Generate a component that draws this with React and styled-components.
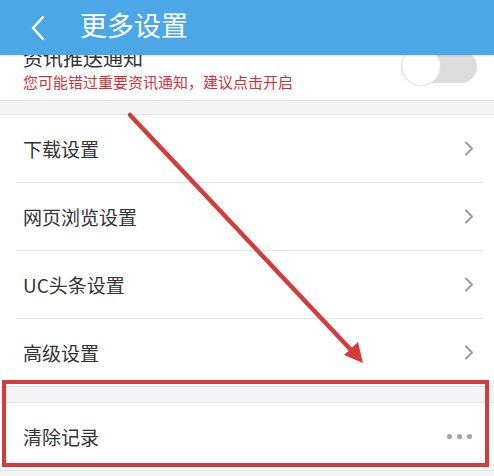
import React from 'react'
import styled, { createGlobalStyle } from 'styled-components'

const GlobalStyle = createGlobalStyle`
    html, body {
        margin: 0;
        padding: 0;
        background: #f4f4f6;
    }
    body {
        font-family: "Noto Sans CJK SC", "Noto Sans", sans-serif;
        color: #333;
    }
`

const Page = styled.div`
    position: relative;
    width: 494px;
    height: 476px;
    overflow: hidden;
    display: flex;
    flex-direction: column;
    background: #f4f4f6;
`

const Header = styled.header`
    position: relative;
    z-index: 2;
    flex: none;
    height: 55px;
    background: #4ba7e5;
    display: flex;
    align-items: center;
    gap: 33px;
    padding-left: 29px;
    box-shadow: 0 1px 2px rgba(0, 0, 0, 0.12);
`

const Title = styled.h1`
    margin: 0;
    font-size: 27px;
    font-weight: 400;
    color: #fff;
    line-height: 1;
    padding-bottom: 6px;
`

const Scroller = styled.div`
    flex: 1;
    overflow: hidden;
`

const Scrolled = styled.div`
    margin-top: -25px;
`

const Section = styled.section`
    background: #fff;
    border-top: ${({ $top }) => ($top ? '1px solid #e3e3e3' : 'none')};
    border-bottom: 1px solid #e3e3e3;
    padding: ${({ $inset }) => ($inset ? '0 11px 0 16px' : '0')};
`

const Gap = styled.div`
    height: ${({ $h }) => $h}px;
`

const PushRow = styled.div`
    height: 70px;
    display: flex;
    align-items: center;
    justify-content: space-between;
    padding: 0 17px 0 23px;
`

const PushText = styled.div`
    display: flex;
    flex-direction: column;
    padding-top: 8px;
`

const PushTitle = styled.span`
    font-size: 20px;
    line-height: 26px;
    color: #333;
`

const PushHint = styled.span`
    font-size: 15px;
    line-height: 22px;
    color: #cf3338;
`

const Toggle = styled.div`
    position: relative;
    width: 76px;
    height: 32px;
    border-radius: 16px;
    background: #dcdcdc;
    margin-top: 4px;
`

const Knob = styled.div`
    position: absolute;
    left: 0;
    top: -5px;
    width: 40px;
    height: 40px;
    border-radius: 50%;
    background: #fff;
    border: 1px solid #dedede;
    box-sizing: border-box;
`

const Row = styled.div`
    height: ${({ $h }) => $h || 67}px;
    display: flex;
    align-items: center;
    justify-content: space-between;
    padding: 0 9px 0 7px;
    border-bottom: 1px solid #e6e6e6;
    font-size: 19px;
    color: #333;

    &:last-child {
        border-bottom: none;
    }
`

const PlainRow = styled(Row)`
    padding: 0 22px 0 23px;
`

const Dots = styled.div`
    display: flex;
    gap: 5px;

    span {
        width: 5px;
        height: 5px;
        border-radius: 50%;
        background: #a3a3a3;
    }
`

const Marker = styled.div`
    position: absolute;
    z-index: 3;
    left: 2px;
    top: 380px;
    width: 487px;
    height: 87px;
    box-sizing: border-box;
    border: 4px solid #d43b3b;
    pointer-events: none;
`

const ArrowLayer = styled.svg`
    position: absolute;
    z-index: 3;
    left: 0;
    top: 0;
    pointer-events: none;
`

const BackIcon = () => (
    <svg width="18" height="26" viewBox="0 0 18 26">
        <path d="M14 2 L4 13 L14 24" fill="none" stroke="#fff" strokeWidth="2.4" strokeLinecap="round" strokeLinejoin="round" />
    </svg>
)

const Chevron = () => (
    <svg width="10" height="15" viewBox="0 0 10 15">
        <path d="M2 1.5 L8 7.5 L2 13.5" fill="none" stroke="#999" strokeWidth="2" strokeLinecap="round" strokeLinejoin="round" />
    </svg>
)

const settings = ['下载设置', '网页浏览设置', 'UC头条设置', '高级设置']

const App = () => (
    <Page>
        <GlobalStyle />
        <Header>
            <BackIcon />
            <Title>更多设置</Title>
        </Header>
        <Scroller>
            <Scrolled>
                <Section>
                    <PushRow>
                        <PushText>
                            <PushTitle>资讯推送通知</PushTitle>
                            <PushHint>您可能错过重要资讯通知，建议点击开启</PushHint>
                        </PushText>
                        <Toggle>
                            <Knob />
                        </Toggle>
                    </PushRow>
                </Section>
                <Gap $h={13} />
                <Section $top $inset>
                    {settings.map(label => (
                        <Row key={label}>
                            {label}
                            <Chevron />
                        </Row>
                    ))}
                </Section>
                <Gap $h={15} />
                <Section $top>
                    <PlainRow>
                        清除记录
                        <Dots><span /><span /><span /></Dots>
                    </PlainRow>
                </Section>
            </Scrolled>
        </Scroller>

        <Marker />
        <ArrowLayer width="494" height="476" viewBox="0 0 494 476">
            <line x1="130" y1="115" x2="352" y2="351" stroke="#d43b3b" strokeWidth="4.5" strokeLinecap="round" />
            <polygon points="363,363 344,355 358,342" fill="#d43b3b" />
        </ArrowLayer>
    </Page>
)

export default App
